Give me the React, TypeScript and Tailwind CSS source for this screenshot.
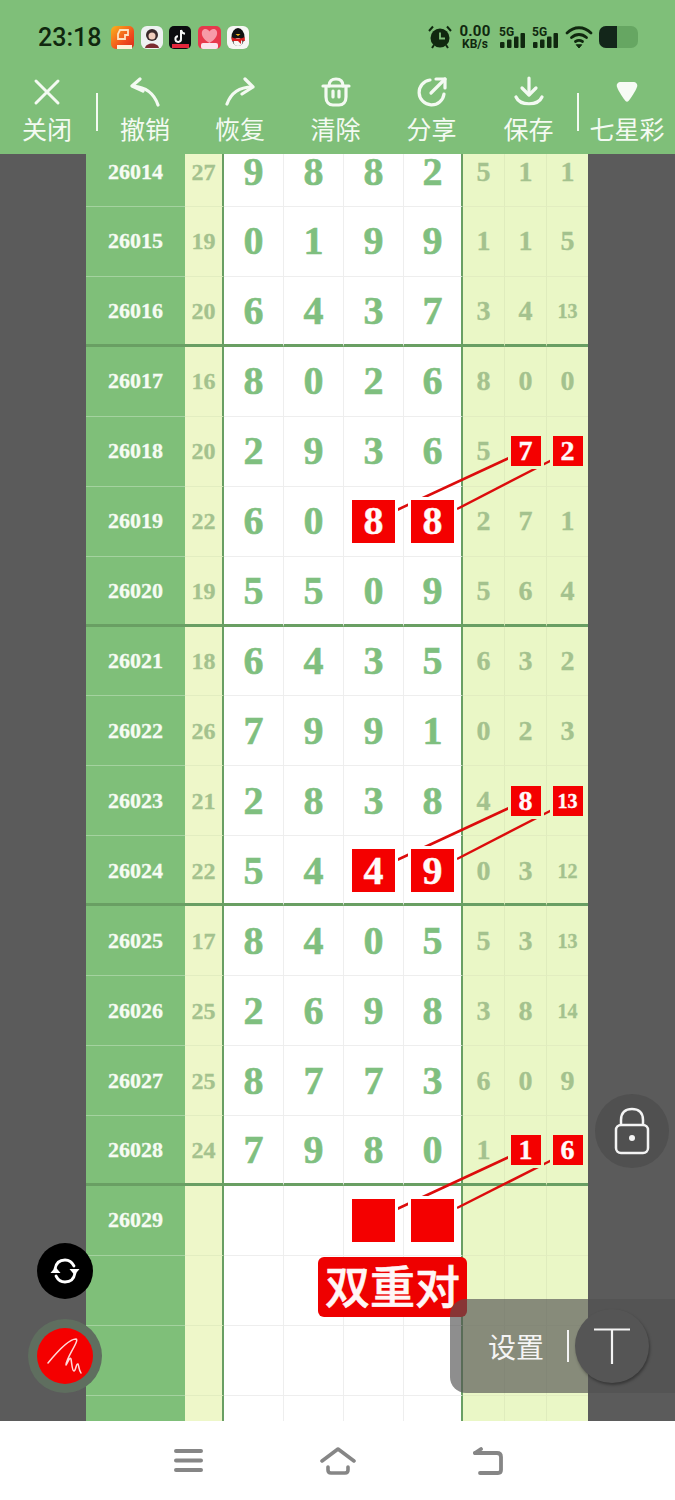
import React from 'react';

type Row = {
  issue: string;
  sum?: string;
  digits?: string[];
  extra?: string[];
  hot?: number[];
  hotExtra?: number[];
  heavy?: boolean;
};

const rows: Row[] = [
  { issue: '26014', sum: '27', digits: ['9', '8', '8', '2'], extra: ['5', '1', '1'] },
  { issue: '26015', sum: '19', digits: ['0', '1', '9', '9'], extra: ['1', '1', '5'] },
  { issue: '26016', sum: '20', digits: ['6', '4', '3', '7'], extra: ['3', '4', '13'], heavy: true },
  { issue: '26017', sum: '16', digits: ['8', '0', '2', '6'], extra: ['8', '0', '0'] },
  { issue: '26018', sum: '20', digits: ['2', '9', '3', '6'], extra: ['5', '7', '2'], hotExtra: [1, 2] },
  { issue: '26019', sum: '22', digits: ['6', '0', '8', '8'], extra: ['2', '7', '1'], hot: [2, 3] },
  { issue: '26020', sum: '19', digits: ['5', '5', '0', '9'], extra: ['5', '6', '4'], heavy: true },
  { issue: '26021', sum: '18', digits: ['6', '4', '3', '5'], extra: ['6', '3', '2'] },
  { issue: '26022', sum: '26', digits: ['7', '9', '9', '1'], extra: ['0', '2', '3'] },
  { issue: '26023', sum: '21', digits: ['2', '8', '3', '8'], extra: ['4', '8', '13'], hotExtra: [1, 2] },
  { issue: '26024', sum: '22', digits: ['5', '4', '4', '9'], extra: ['0', '3', '12'], hot: [2, 3], heavy: true },
  { issue: '26025', sum: '17', digits: ['8', '4', '0', '5'], extra: ['5', '3', '13'] },
  { issue: '26026', sum: '25', digits: ['2', '6', '9', '8'], extra: ['3', '8', '14'] },
  { issue: '26027', sum: '25', digits: ['8', '7', '7', '3'], extra: ['6', '0', '9'] },
  { issue: '26028', sum: '24', digits: ['7', '9', '8', '0'], extra: ['1', '1', '6'], hotExtra: [1, 2], heavy: true },
  { issue: '26029', digits: ['', '', '', ''], hot: [2, 3] },
  { issue: '' },
  { issue: '' },
  { issue: '' },
];

// connector lines between the marked cells, in page coordinates
const links = [
  [397, 510, 509, 458],
  [457, 509, 552, 460],
  [397, 860, 509, 808],
  [457, 859, 552, 810],
  [397, 1209, 509, 1157],
  [457, 1208, 552, 1160],
];

const tools = [
  { label: '撤销', width: 'w-[94px]', icon: <UndoIcon /> },
  { label: '恢复', width: 'w-[96px]', icon: <RedoIcon /> },
  { label: '清除', width: 'w-[95px]', icon: <ClearIcon /> },
  { label: '分享', width: 'w-[97px]', icon: <ShareIcon /> },
  { label: '保存', width: 'w-[97px]', icon: <SaveIcon /> },
];

function CloseIcon() {
  return (
    <svg width="30" height="30" viewBox="0 0 30 30" fill="none" stroke="#f4faf2" strokeWidth="3" strokeLinecap="round">
      <path d="M4 4 L26 26 M26 4 L4 26" />
    </svg>
  );
}

function UndoIcon() {
  return (
    <svg width="30" height="30" viewBox="0 0 30 30" fill="none" stroke="#f4faf2" strokeWidth="3.200" strokeLinecap="round" strokeLinejoin="round">
      <path d="M10 2 L2 9 L13 14" />
      <path d="M3 9 C15 10 24 16 28 28" />
    </svg>
  );
}

function RedoIcon() {
  return (
    <svg width="30" height="30" viewBox="0 0 30 30" fill="none" stroke="#f4faf2" strokeWidth="3.200" strokeLinecap="round" strokeLinejoin="round">
      <path d="M20 2 L28 10 L17 17" />
      <path d="M27 10 C15 10 6 16 2 27" />
    </svg>
  );
}

function ClearIcon() {
  return (
    <svg width="30" height="30" viewBox="0 0 30 30" fill="none" stroke="#f4faf2" strokeWidth="3.200" strokeLinecap="round" strokeLinejoin="round">
      <path d="M2 9 L28 9" />
      <path d="M8 9 C8 4 11 2 15 2 C19 2 22 4 22 9" />
      <path d="M5 10 L5 20 C5 25 8 28 12 28 L18 28 C22 28 25 25 25 20 L25 10" />
      <path d="M12 14 L12 20 M18 14 L18 20" />
    </svg>
  );
}

function ShareIcon() {
  return (
    <svg width="32" height="32" viewBox="0 0 32 32" fill="none" stroke="#f4faf2" strokeWidth="3.200" strokeLinecap="round" strokeLinejoin="round">
      <path d="M14 4 A12.500 12.500 0 1 0 28 18" />
      <path d="M15 17 L29 3" />
      <path d="M20 3 L29 3 L29 12" />
    </svg>
  );
}

function SaveIcon() {
  return (
    <svg width="32" height="32" viewBox="0 0 32 32" fill="none" stroke="#f4faf2" strokeWidth="3.200" strokeLinecap="round" strokeLinejoin="round">
      <path d="M16 2 L16 18" />
      <path d="M9 12 L16 19 L23 12" />
      <path d="M3 21 C7 30 25 30 29 21" />
    </svg>
  );
}

function DropIcon() {
  return (
    <svg width="22" height="20" viewBox="0 0 22 20" fill="#f7fbf5">
      <path d="M1 5 C0 2 2 0 5 0 L17 0 C20 0 22 2 21 5 C19 10 15 16 12.500 19 C11.500 20 10.500 20 9.500 19 C7 16 3 10 1 5 Z" />
    </svg>
  );
}

function AppIcons() {
  return (
    <div className="ml-[10px] flex items-center gap-[6.500px]">
      <svg width="23" height="23" viewBox="0 0 23 23">
        <defs>
          <linearGradient id="shopTile" x1="0" y1="0" x2="1" y2="1">
            <stop offset="0" stopColor="#f8b41c" />
            <stop offset="0.6" stopColor="#f2501c" />
            <stop offset="1" stopColor="#d8281c" />
          </linearGradient>
        </defs>
        <rect width="23" height="23" rx="5" fill="url(#shopTile)" />
        <path d="M9 4 H17 V9 H14 V13 H7 V8 Z" fill="none" stroke="#fde3c0" strokeWidth="1.800" />
        <rect x="6" y="19" width="15" height="4" fill="#fff2d8" />
      </svg>
      <svg width="22" height="23" viewBox="0 0 22 23">
        <rect width="22" height="23" rx="6" fill="#eef2f2" />
        <circle cx="11" cy="9" r="6" fill="#3a2a2c" />
        <circle cx="11" cy="10" r="3.500" fill="#f0cdbd" />
        <path d="M4 22 C5 16 17 16 18 22 Z" fill="#7a2c30" />
      </svg>
      <svg width="22" height="23" viewBox="0 0 22 23">
        <rect width="22" height="23" rx="5" fill="#0b0b0f" />
        <path d="M12 4 V13 A2.800 2.800 0 1 1 9 10.300 M12 4 C12.500 6.500 14 7.500 16 7.800" fill="none" stroke="#f6f6f6" strokeWidth="2" />
        <rect x="3" y="18" width="17" height="4" fill="#e3263c" />
      </svg>
      <svg width="23" height="23" viewBox="0 0 23 23">
        <rect width="23" height="23" rx="5" fill="#e8384c" />
        <path d="M11.500 17 C1 11 3 3 7.500 3 C9.500 3 11 4.500 11.500 5.500 C12 4.500 13.500 3 15.500 3 C20 3 22 11 11.500 17 Z" fill="#f79aa8" />
        <rect x="3" y="17" width="17" height="6" rx="2" fill="#fbe3ee" />
      </svg>
      <svg width="22" height="23" viewBox="0 0 22 23">
        <rect width="22" height="23" rx="6" fill="#f7f7f5" />
        <ellipse cx="11" cy="11" rx="6.500" ry="9" fill="#111" />
        <ellipse cx="11" cy="16" rx="4.500" ry="4" fill="#f7f7f5" />
        <path d="M4.500 11 C8 13 14 13 17.500 11 L18 15 L14 14.500 L14 18 L11 15 L5 15 Z" fill="#d81e1e" />
        <path d="M8.500 8 L13.500 8 L11 10 Z" fill="#f2b41e" />
      </svg>
    </div>
  );
}

function StatusIcons() {
  const bars = (
    <svg width="26" height="15" viewBox="0 0 26 15" fill="#10280f">
      <rect x="1" y="9" width="4.500" height="6" rx="1" />
      <rect x="8" y="6.500" width="4.500" height="8.500" rx="1" />
      <rect x="15" y="3.500" width="4.500" height="11.500" rx="1" />
      <rect x="21.500" y="0" width="4.500" height="15" rx="1" />
    </svg>
  );
  return (
    <div className="ml-auto mr-[37px] flex items-center font-['Roboto',sans-serif] text-[#10280f]">
      <svg width="24" height="24" viewBox="0 0 24 24" fill="#10280f">
        <circle cx="12" cy="13" r="9.500" />
        <path d="M1 6 L5 1.500 M23 6 L19 1.500 M4 23 L6 20 M20 23 L18 20" stroke="#10280f" strokeWidth="2" />
        <path d="M12 7.500 V13.500 H17" fill="none" stroke="#7fbf79" strokeWidth="1.800" />
      </svg>
      <div className="ml-[8px] flex w-[30px] flex-col items-center">
        <span className="text-[15px] leading-[13px] font-bold tracking-[0.2px]">0.00</span>
        <span className="text-[12px] leading-[12px] font-bold">KB/s</span>
      </div>
      <div className="ml-[9px] flex w-[26px] flex-col">
        <span className="-mb-[5px] text-[12px] leading-[12px] font-bold">5G</span>
        {bars}
      </div>
      <div className="ml-[7px] flex w-[26px] flex-col">
        <span className="-mb-[5px] text-[12px] leading-[12px] font-bold">5G</span>
        {bars}
      </div>
      <svg className="ml-[7px]" width="28" height="24" viewBox="0 0 28 24" fill="none" stroke="#10280f" strokeWidth="2.800" strokeLinecap="round">
        <path d="M2 8 C9 1 19 1 26 8" />
        <path d="M6.500 12.500 C11 8.500 17 8.500 21.500 12.500" />
        <path d="M10.500 16.500 C13 15 15 15 17.500 16.500" />
        <path d="M11.500 20 L14 23 L16.500 20 Z" fill="#10280f" strokeWidth="1" />
      </svg>
      <div className="ml-[6px] flex h-[22px] w-[39px] overflow-hidden rounded-[7px] bg-[#66a662]">
        <div className="h-full w-[18px] bg-[#13261a]" />
      </div>
    </div>
  );
}

function SideRedBox({ value, big }: { value: string; big?: boolean }) {
  const size = big
    ? 'h-[43px] w-[43px] text-[40px] shadow-[0_0_0_3px_#ffffff]'
    : value.length > 1
      ? 'h-[30px] w-[30px] text-[20px] shadow-[0_0_0_3px_#eaf7c6]'
      : 'h-[30px] w-[30px] text-[28px] shadow-[0_0_0_3px_#eaf7c6]';
  return (
    <div className={`relative z-10 flex items-center justify-center bg-[#f40000] leading-none font-bold text-[#fffafa] [-webkit-text-stroke:0.4px] ${size}`}>
      {value}
    </div>
  );
}

function TableRow({ row }: { row: Row }) {
  const line = row.heavy ? 'border-b-[3px] border-b-[#699f63] pt-[2px]' : 'border-b-[1.500px] border-b-[#eeeeee]';
  const yellowLine = row.heavy ? 'border-b-[3px] border-b-[#699f63] pt-[2px]' : 'border-b border-b-[#e2edc0]';
  const issueLine = row.heavy ? 'border-b-[3px] border-b-[#699f63] pt-[2px]' : 'border-b-[1.500px] border-b-[#a4d29f]';
  return (
    <div className="grid h-[69.93px] grid-cols-[99px_39px_60px_60px_60px_59px_42px_42px_41px]">
      <div className={`flex items-center justify-center bg-[#7fbf79] text-[22px] leading-none font-bold text-[#f6fbf3] [-webkit-text-stroke:0.3px] ${issueLine}`}>
        {row.issue}
      </div>
      <div className={`flex items-center justify-center border-r-[2px] border-r-[#699f63] bg-[#eef7c9] text-[24px] leading-none font-bold text-[#a4c28e] [-webkit-text-stroke:0.3px] ${yellowLine}`}>
        {row.sum}
      </div>
      {[0, 1, 2, 3].map((i) => {
        const value = row.digits?.[i] ?? '';
        const hot = row.hot?.includes(i);
        return (
          <div
            key={i}
            className={`flex items-center justify-center bg-white text-[40px] leading-none font-bold text-[#7fbf7f] [-webkit-text-stroke:0.6px] ${line} ${i === 3 ? 'border-r-[2px] border-r-[#699f63]' : 'border-r-[1.500px] border-r-[#eeeeee]'}`}
          >
            {hot ? <SideRedBox value={value} big /> : value}
          </div>
        );
      })}
      {[0, 1, 2].map((i) => {
        const value = row.extra?.[i] ?? '';
        const hot = row.hotExtra?.includes(i);
        return (
          <div
            key={i}
            className={`flex items-center justify-center bg-[#eaf7c6] leading-none font-bold text-[#a4c28e] [-webkit-text-stroke:0.3px] ${yellowLine} ${i < 2 ? 'border-r border-r-[#dfecbd]' : ''} ${value.length > 1 ? 'text-[20px]' : 'text-[28px]'}`}
          >
            {hot ? <SideRedBox value={value} /> : value}
          </div>
        );
      })}
    </div>
  );
}

export default function App() {
  return (
    <div className="flex h-[1500px] w-[675px] flex-col overflow-hidden bg-white font-['Liberation_Serif',serif]">
      <header className="h-[154px] shrink-0 bg-[#7fbf79] font-['Noto_Sans_CJK_SC',sans-serif] text-[#f4faf2]">
        <div className="flex h-[74px] items-center pl-[38px]">
          <span className="font-['Roboto',sans-serif] text-[25px] leading-none font-medium text-[#10280f]">23:18</span>
          <AppIcons />
          <StatusIcons />
        </div>
        <div className="flex h-[80px]">
          <div className="flex w-[96px] flex-col items-center pr-[2px]">
            <div className="flex h-[36px] items-center"><CloseIcon /></div>
            <span className="text-[25px] leading-[36px]">关闭</span>
          </div>
          <div className="mt-[19px] h-[38px] w-[2px] bg-[#f4faf2]" />
          {tools.map((t) => (
            <div key={t.label} className={`flex flex-col items-center ${t.width}`}>
              <div className="flex h-[36px] items-center">{t.icon}</div>
              <span className="text-[25px] leading-[36px]">{t.label}</span>
            </div>
          ))}
          <div className="mt-[19px] h-[38px] w-[2px] bg-[#f4faf2]" />
          <div className="flex w-[96px] flex-col items-center">
            <div className="flex h-[36px] items-center"><DropIcon /></div>
            <span className="text-[25px] leading-[36px] whitespace-nowrap">七星彩</span>
          </div>
        </div>
      </header>

      <main className="relative min-h-0 flex-1 overflow-hidden bg-[#5b5b5b]">
        <div className="-mt-[16.930px] ml-[86px] w-[502px]">
          {rows.map((row, i) => (
            <TableRow key={i} row={row} />
          ))}
        </div>

        <svg className="pointer-events-none absolute inset-0 z-[5]" width="675" height="1267" viewBox="0 154 675 1267">
          {links.map(([x1, y1, x2, y2], i) => (
            <line key={i} x1={x1} y1={y1} x2={x2} y2={y2} stroke="#dc0c0c" strokeWidth="2.500" />
          ))}
        </svg>

        {/* 标记标签 */}
        <div className="absolute top-[1103px] left-[318px] z-20 flex h-[60px] w-[149px] items-center justify-center rounded-[6px] bg-[#ee0000] pb-[5px] font-['Noto_Sans_CJK_SC',sans-serif] text-[45px] leading-none font-medium text-[#fff6f6] [-webkit-text-stroke:0.6px]">
          双重对
        </div>

        {/* 锁定 */}
        <div className="absolute top-[940px] left-[595px] z-20 flex h-[74px] w-[74px] items-center justify-center rounded-full bg-[#505050]">
          <svg width="36" height="48" viewBox="0 0 36 48" fill="none" stroke="#f4f4f4" strokeWidth="2.500" strokeLinejoin="round">
            <rect x="2" y="18" width="32" height="28" rx="5" />
            <path d="M7 18 V13 C7 5 12 2 18 2 C24 2 29 5 29 13 V18" />
            <circle cx="18" cy="31" r="3" fill="#f4f4f4" stroke="none" />
          </svg>
        </div>

        {/* 设置面板 */}
        <div className="absolute top-[1145px] right-0 z-30 flex h-[94px] w-[225px] items-center rounded-l-[16px] bg-[#525252]/65 font-['Noto_Sans_CJK_SC',sans-serif] text-[#f4f4f4]">
          <span className="ml-[38px] text-[28px] leading-none">设置</span>
          <div className="ml-[23px] h-[32px] w-[2px] bg-[#f4f4f4]" />
          <div className="ml-[6px] flex h-[74px] w-[74px] items-center justify-center rounded-full bg-[#555555] shadow-[1px_2px_3px_rgba(0,0,0,0.35)]">
            <svg width="38" height="36" viewBox="0 0 38 36" fill="none" stroke="#f4f4f4" strokeWidth="2.200">
              <path d="M1 1.500 H37 M19 1.500 V36" />
            </svg>
          </div>
        </div>

        {/* 悬浮按钮 */}
        <div className="absolute top-[1089px] left-[37px] z-20 flex h-[56px] w-[56px] items-center justify-center rounded-full bg-black">
          <svg width="30" height="26" viewBox="0 0 30 26" fill="none" stroke="#ffffff" strokeWidth="2.800" strokeLinecap="round">
            <path d="M5 11 C6 5 10 2 15 2 C19 2 22 4 24 8" />
            <path d="M25 15 C24 21 20 24 15 24 C11 24 8 22 6 18" />
            <path d="M19.500 11 L29.500 11 L24.500 17 Z" fill="#ffffff" stroke="none" />
            <path d="M0.500 15 L10.500 15 L5.500 9 Z" fill="#ffffff" stroke="none" />
          </svg>
        </div>
        <div className="absolute top-[1165px] left-[28px] z-20 flex h-[74px] w-[74px] items-center justify-center rounded-full bg-[#5f6e5f]">
          <div className="flex h-[56px] w-[56px] items-center justify-center rounded-full bg-[#f40000]">
            <svg width="36" height="36" viewBox="0 0 36 36" fill="none" stroke="#ffd9d9" strokeWidth="1.500" strokeLinecap="round" strokeLinejoin="round">
              <path d="M1 25 C10 14 22 1 29 1 C33 2 19 20 19 27 C21 24 23 18 24 21 C25 26 25 33 27 33 C29 33 29 25 31 26 C32 28 32 33 34 35" />
            </svg>
          </div>
        </div>
      </main>

      <nav className="flex h-[79px] shrink-0 items-center justify-center gap-[116px] bg-white">
        <svg width="31" height="26" viewBox="0 0 31 26" fill="none" stroke="#868686" strokeWidth="4" strokeLinecap="round">
          <path d="M3 3 H28 M3 12.500 H28 M3 22 H28" />
        </svg>
        <svg width="36" height="28" viewBox="0 0 36 28" fill="none" stroke="#868686" strokeWidth="3.600" strokeLinecap="round" strokeLinejoin="round">
          <path d="M2 14 L18 2 L34 14" />
          <path d="M8 20 V23 C8 25 9 26 11 26 H25 C27 26 28 25 28 23 V20" />
        </svg>
        <svg width="31" height="28" viewBox="0 0 31 28" fill="none" stroke="#868686" strokeWidth="3.800" strokeLinecap="round" strokeLinejoin="round">
          <path d="M3 6 H25 C27.500 6 29 7 29 10 V23 C29 25 28 26 26 26 H8" />
          <path d="M9 2 L3 6" />
        </svg>
      </nav>
    </div>
  );
}
